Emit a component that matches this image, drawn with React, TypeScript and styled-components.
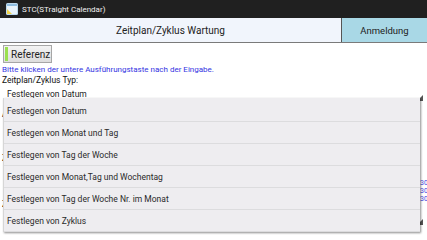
import styled, { createGlobalStyle } from "styled-components";

const GlobalStyle = createGlobalStyle`
  html, body {
    margin: 0;
    padding: 0;
    background: #ffffff;
  }
  body {
    font-family: Roboto, "Noto Sans", "Liberation Sans", sans-serif;
    width: 427px;
    height: 240px;
    overflow: hidden;
  }
`;

const Screen = styled.div`
  position: relative;
  width: 427px;
  height: 240px;
  overflow: hidden;
  display: flex;
  flex-direction: column;
  background: #ffffff;
`;

const TitleBar = styled.div`
  height: 18px;
  flex: none;
  background: #202020;
  display: flex;
  align-items: center;
  gap: 4px;
  padding-left: 6px;
  color: #f0f0f0;
  font-size: 8px;
`;

const TabBar = styled.div`
  height: 24px;
  flex: none;
  display: flex;
  border-bottom: 1px solid #7a7a7a;
`;

const Tab = styled.div<{ $active?: boolean }>`
  display: flex;
  align-items: center;
  justify-content: center;
  font-size: ${(p) => (p.$active ? "10px" : "9.5px")};
  color: #222;
  background: ${(p) => (p.$active ? "#f1f5fc" : "#a9d8e6")};
  width: ${(p) => (p.$active ? "341px" : "auto")};
  flex: ${(p) => (p.$active ? "none" : "1")};
  border-right: ${(p) => (p.$active ? "1px solid #555" : "none")};
`;

const Content = styled.div`
  display: flex;
  flex-direction: column;
  align-items: flex-start;
  padding: 1px 0 0 2px;
`;

const RefButton = styled.div`
  margin: 1px 0 0 1px;
  width: 49px;
  height: 18px;
  display: flex;
  align-items: center;
  gap: 3px;
  padding: 0 0 0 1px;
  box-sizing: border-box;
  border: 1px solid #a6a6a6;
  background: linear-gradient(#f3f3f3, #dddddd);
  font-size: 10px;
  color: #222;
`;

const GreenMark = styled.span`
  width: 3px;
  align-self: stretch;
  margin: 1px 0;
  background: #9be04f;
`;

const Hint = styled.div`
  margin-top: 1px;
  font-size: 8px;
  color: #3434e2;
  line-height: 11px;
`;

const Label = styled.div<{ $top?: number }>`
  margin-top: ${(p) => p.$top ?? 0}px;
  font-size: 8.5px;
  color: #111;
  line-height: 11px;
  white-space: nowrap;
`;

const Spinner = styled.div`
  position: relative;
  width: 423px;
  height: 15px;
  display: flex;
  align-items: center;
  padding-left: 5px;
  box-sizing: border-box;
  font-size: 8.5px;
  color: #222;
`;

const Corner = styled.span`
  position: absolute;
  right: 2px;
  bottom: 0;
  width: 0;
  height: 0;
  border-left: 6px solid transparent;
  border-bottom: 6px solid #555;
`;

const RightNotes = styled.div`
  position: absolute;
  right: 0;
  top: 179px;
  display: flex;
  flex-direction: column;
  font-size: 7px;
  line-height: 8px;
  color: #4a4ae0;
  width: 7px;
  overflow: hidden;
`;

const Popup = styled.div`
  position: absolute;
  left: 3px;
  top: 98px;
  width: 417px;
  height: 134px;
  box-sizing: border-box;
  padding-top: 2px;
  background: #eeedf0;
  border-left: 1px solid #d6d6d6;
  box-shadow: 1px 1px 2px rgba(0, 0, 0, 0.45);
  display: flex;
  flex-direction: column;
`;

const Item = styled.div`
  height: 21px;
  flex: none;
  display: flex;
  align-items: center;
  padding: 1px 0 0 3px;
  box-sizing: border-box;
  height: 22px;
  font-size: 8.5px;
  color: #2a2a2a;
  border-bottom: 1px solid #dcdcde;
`;

const AppIcon = () => (
  <svg width="12" height="12" viewBox="0 0 12 12">
    <rect x="0" y="0" width="12" height="12" rx="1.5" fill="#bcd8ec" />
    <rect x="1" y="1" width="10" height="10" rx="1" fill="#e9f3fa" />
    <polygon points="1,11 1,6 6,11" fill="#f1d34a" />
    <rect x="1" y="1" width="10" height="2" fill="#8fbde0" />
  </svg>
);

const items = [
  "Festlegen von Datum",
  "Festlegen von Monat und Tag",
  "Festlegen von Tag der Woche",
  "Festlegen von Monat,Tag und Wochentag",
  "Festlegen von Tag der Woche Nr. im Monat",
  "Festlegen von Zyklus",
];

export default function App() {
  return (
    <>
      <GlobalStyle />
      <Screen>
        <TitleBar>
          <AppIcon />
          <span>STC(STraight Calendar)</span>
        </TitleBar>
        <TabBar>
          <Tab $active>Zeitplan/Zyklus Wartung</Tab>
          <Tab>Anmeldung</Tab>
        </TabBar>
        <Content>
          <RefButton>
            <GreenMark />
            Referenz
          </RefButton>
          <Hint>Bitte klicken der untere Ausführungstaste nach der Eingabe.</Hint>
          <Label>Zeitplan/Zyklus Typ:</Label>
          <Spinner>
            Festlegen von Datum
            <Corner />
          </Spinner>
          <Label $top={8}>Anfangsdatum:</Label>
          <Label $top={33}>Zeit:</Label>
          <Label $top={35}>Zyklus:</Label>
          <Spinner>
            <Corner />
          </Spinner>
          <Label $top={20}>Benachrichtigung und Alarm</Label>
        </Content>
        <RightNotes>
          <span>30</span>
          <span>30</span>
          <span>30</span>
        </RightNotes>
        <Popup>
          {items.map((t) => (
            <Item key={t}>{t}</Item>
          ))}
        </Popup>
      </Screen>
    </>
  );
}
